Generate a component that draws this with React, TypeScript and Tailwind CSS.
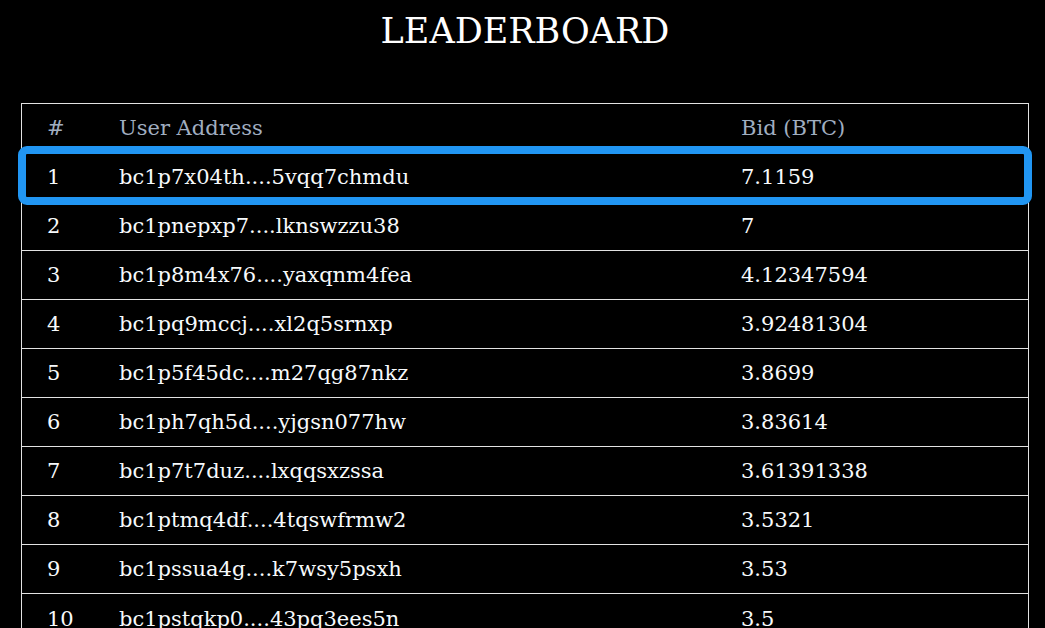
import React from "react";

const rows: [string, string, string][] = [
  ["1", "bc1p7x04th....5vqq7chmdu", "7.1159"],
  ["2", "bc1pnepxp7....lknswzzu38", "7"],
  ["3", "bc1p8m4x76....yaxqnm4fea", "4.12347594"],
  ["4", "bc1pq9mccj....xl2q5srnxp", "3.92481304"],
  ["5", "bc1p5f45dc....m27qg87nkz", "3.8699"],
  ["6", "bc1ph7qh5d....yjgsn077hw", "3.83614"],
  ["7", "bc1p7t7duz....lxqqsxzssa", "3.61391338"],
  ["8", "bc1ptmq4df....4tqswfrmw2", "3.5321"],
  ["9", "bc1pssua4g....k7wsy5psxh", "3.53"],
  ["10", "bc1pstqkp0....43pq3ees5n", "3.5"],
];

export default function App() {
  return (
    <div
      className="min-h-screen bg-black text-[#f7fafc]"
      style={{ fontFamily: '"DejaVu Serif", serif' }}
    >
      <div className="ml-[21px] w-[1008px] pt-[11px]">
        <h1 className="h-[40px] text-center text-[35px] leading-[40px] font-normal text-white">
          LEADERBOARD
        </h1>
        <div className="mt-[52px] border border-[#e2e2e2] text-[21px]">
          <div className="grid h-[49px] grid-cols-[72px_622px_1fr] items-center border-b border-[#e2e2e2] pt-[1px] text-[#a0aec0]">
            <div className="pl-[25px]">#</div>
            <div className="pl-[25px]">User Address</div>
            <div className="pl-[25px]">Bid (BTC)</div>
          </div>
          {rows.map((r, i) => (
            <div
              key={r[0]}
              className={`relative grid h-[49px] grid-cols-[72px_622px_1fr] items-center pt-[2px] ${
                i < rows.length - 1 ? "border-b border-[#e2e2e2]" : ""
              }`}
            >
              <div className="pl-[25px]">{r[0]}</div>
              <div className="pl-[25px]">{r[1]}</div>
              <div className="pl-[25px]">{r[2]}</div>
              {i === 0 && (
                <div className="pointer-events-none absolute -top-[7px] -bottom-[4px] -left-[4px] -right-[4px] rounded-[9px] border-[8px] border-[#2196f3]" />
              )}
            </div>
          ))}
        </div>
      </div>
    </div>
  );
}
